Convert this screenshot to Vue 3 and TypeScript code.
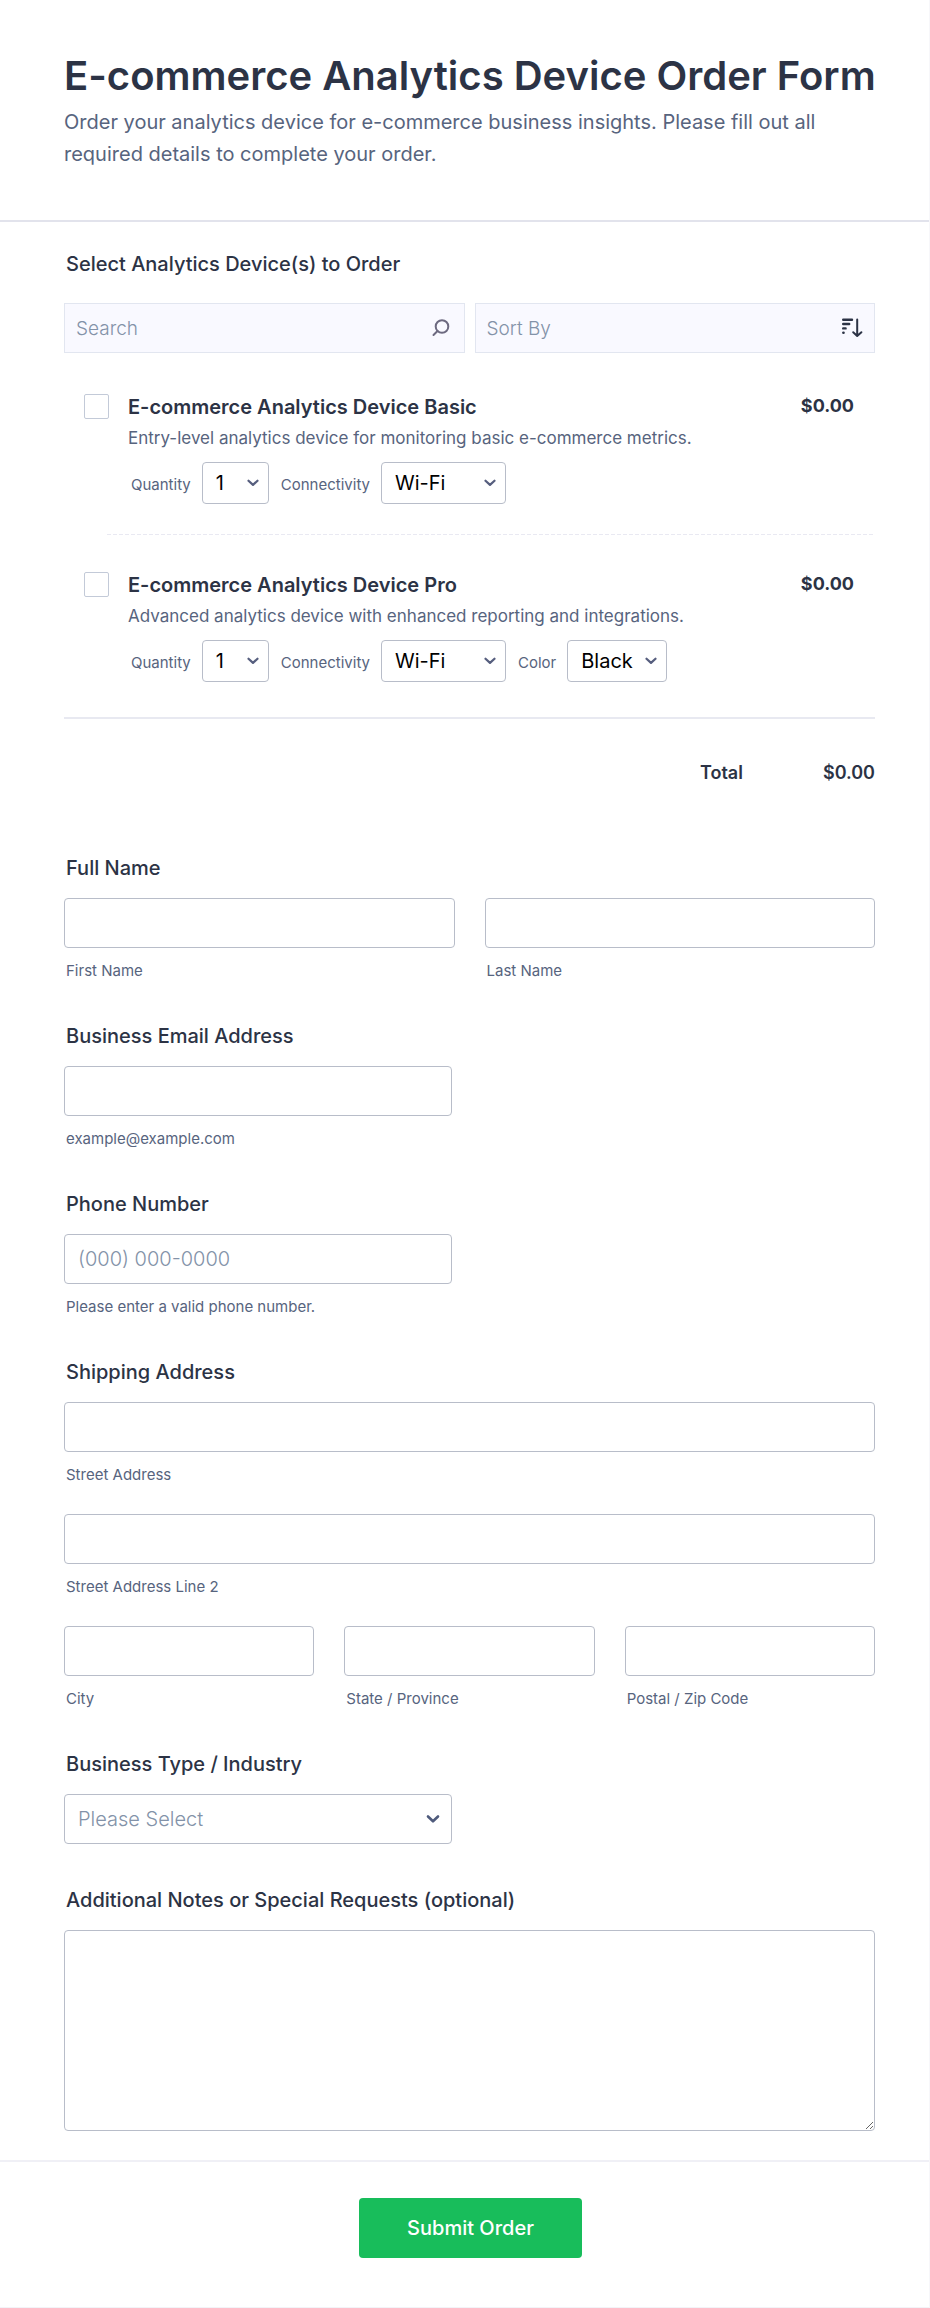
<script setup lang="ts">
import { ref } from 'vue'

interface Option {
  id: string
  label: string
  choices: string[]
  size: 'small' | 'wide' | 'medium'
}

interface Product {
  id: string
  name: string
  description: string
  price: string
  options: Option[]
}

const quantity = ['1', '2', '3', '4', '5', '6', '7', '8', '9', '10']
const connectivity = ['Wi-Fi', 'Ethernet', 'Bluetooth']

const products: Product[] = [
  {
    id: 'basic',
    name: 'E-commerce Analytics Device Basic',
    description: 'Entry-level analytics device for monitoring basic e-commerce metrics.',
    price: '$0.00',
    options: [
      { id: 'quantity', label: 'Quantity', choices: quantity, size: 'small' },
      { id: 'connectivity', label: 'Connectivity', choices: connectivity, size: 'wide' },
    ],
  },
  {
    id: 'pro',
    name: 'E-commerce Analytics Device Pro',
    description: 'Advanced analytics device with enhanced reporting and integrations.',
    price: '$0.00',
    options: [
      { id: 'quantity', label: 'Quantity', choices: quantity, size: 'small' },
      { id: 'connectivity', label: 'Connectivity', choices: connectivity, size: 'wide' },
      { id: 'color', label: 'Color', choices: ['Black', 'White'], size: 'medium' },
    ],
  },
]

const addressRows = [
  [{ id: 'street', label: 'Street Address' }],
  [{ id: 'street2', label: 'Street Address Line 2' }],
  [
    { id: 'city', label: 'City' },
    { id: 'state', label: 'State / Province' },
    { id: 'postal', label: 'Postal / Zip Code' },
  ],
]

const industries = ['Retail', 'Wholesale', 'Technology', 'Other']
const industry = ref('')
</script>

<template>
  <form class="form" @submit.prevent>
    <header class="header">
      <h1>E-commerce Analytics Device Order Form</h1>
      <p>Order your analytics device for e-commerce business insights. Please fill out all required details to complete your order.</p>
    </header>

    <main class="body">
      <section class="products" aria-labelledby="products-title">
        <h2 id="products-title" class="label">Select Analytics Device(s) to Order</h2>

        <div class="filters">
          <div class="filter">
            <input type="search" placeholder="Search" aria-label="Search" />
            <svg class="search-icon" width="18" height="18" viewBox="0 0 18 18" fill="none" stroke="#6d6a80" stroke-width="2" stroke-linecap="round" aria-hidden="true">
              <circle cx="10" cy="7.5" r="6.3" />
              <path d="M5.5 12 1.5 16" />
            </svg>
          </div>
          <div class="filter">
            <select aria-label="Sort By">
              <option>Sort By</option>
              <option>Name</option>
              <option>Price</option>
            </select>
            <svg class="sort-icon" width="22" height="20" viewBox="0 0 22 20" fill="none" stroke="#2c3345" stroke-linecap="round" stroke-linejoin="round" aria-hidden="true">
              <path d="M2.2 1.7H11M2.2 6H8.2M2.2 10.4H4.6" stroke-width="2.4" />
              <path d="M2.4 14.8H2.5" stroke-width="2.6" />
              <path d="M16.2 1.5V17.8M12.2 14.2 16.2 18 20.4 14.2" stroke-width="2" />
            </svg>
          </div>
        </div>

        <article v-for="product in products" :key="product.id" class="product">
          <input :id="product.id" class="tick" type="checkbox" />
          <div class="details">
            <div class="heading">
              <label class="name" :for="product.id">{{ product.name }}</label>
              <span class="price">{{ product.price }}</span>
            </div>
            <p class="description">{{ product.description }}</p>
            <div class="options">
              <div v-for="option in product.options" :key="option.id" class="option">
                <label :for="`${product.id}-${option.id}`">{{ option.label }}</label>
                <span class="picker" :class="option.size">
                  <select :id="`${product.id}-${option.id}`">
                    <option v-for="choice in option.choices" :key="choice">{{ choice }}</option>
                  </select>
                  <svg class="chevron" width="12" height="8" viewBox="0 0 12 8" fill="none" stroke="#565e7e" stroke-width="2.2" stroke-linecap="round" stroke-linejoin="round" aria-hidden="true">
                    <path d="M1.5 1.7 6 5.9 10.5 1.7" />
                  </svg>
                </span>
              </div>
            </div>
          </div>
        </article>

        <div class="total">
          <span>Total</span>
          <output>$0.00</output>
        </div>
      </section>

      <fieldset class="group">
        <legend class="label">Full Name</legend>
        <div class="row">
          <div class="cell">
            <input id="first" class="field" type="text" />
            <label class="hint" for="first">First Name</label>
          </div>
          <div class="cell">
            <input id="last" class="field" type="text" />
            <label class="hint" for="last">Last Name</label>
          </div>
        </div>
      </fieldset>

      <div class="group">
        <label class="label" for="email">Business Email Address</label>
        <input id="email" class="field half" type="email" aria-describedby="email-hint" />
        <span id="email-hint" class="hint">example@example.com</span>
      </div>

      <div class="group">
        <label class="label" for="phone">Phone Number</label>
        <input id="phone" class="field half" type="tel" placeholder="(000) 000-0000" aria-describedby="phone-hint" />
        <span id="phone-hint" class="hint">Please enter a valid phone number.</span>
      </div>

      <fieldset class="group">
        <legend class="label">Shipping Address</legend>
        <div class="address">
          <div v-for="(row, index) in addressRows" :key="index" class="row">
            <div v-for="cell in row" :key="cell.id" class="cell">
              <input :id="cell.id" class="field" type="text" />
              <label class="hint" :for="cell.id">{{ cell.label }}</label>
            </div>
          </div>
        </div>
      </fieldset>

      <div class="group">
        <label class="label" for="industry">Business Type / Industry</label>
        <span class="picker half">
          <select id="industry" v-model="industry" class="field" :class="{ empty: !industry }">
            <option value="">Please Select</option>
            <option v-for="item in industries" :key="item">{{ item }}</option>
          </select>
          <svg class="chevron large" width="14" height="10" viewBox="0 0 14 10" fill="none" stroke="#4f5b7c" stroke-width="2.6" stroke-linecap="round" stroke-linejoin="round" aria-hidden="true">
            <path d="M2 2.5 7 7.3 12 2.5" />
          </svg>
        </span>
      </div>

      <div class="group">
        <label class="label" for="notes">Additional Notes or Special Requests (optional)</label>
        <textarea id="notes" class="field notes"></textarea>
      </div>
    </main>

    <footer class="footer">
      <button type="submit">Submit Order</button>
    </footer>
  </form>
</template>

<style>
body {
  margin: 0;
  background: #fff;
}
</style>

<style scoped>
.form {
  box-sizing: border-box;
  border-right: 1px solid #f7f7fa;
  border-bottom: 1px solid #f3f3f8;
  background: #fff;
  color: #2c3345;
  font-family: Inter, "Liberation Sans", sans-serif;
  font-size: 20px;
}

.form * {
  box-sizing: border-box;
}

.header {
  padding: 52px 40px 50px 64px;
  border-bottom: 2px solid #e2e3ec;
}

h1 {
  margin: 0;
  font-size: 40px;
  font-weight: 600;
  line-height: 48px;
}

.header p {
  margin: 6px 0 0;
  color: #57647e;
  font-weight: 400;
  line-height: 32px;
}

.body {
  display: flex;
  flex-direction: column;
  gap: 44px;
  padding: 30px 54px 29px 64px;
}

.label {
  display: block;
  margin: 0 0 18px;
  padding: 0 2px;
  font-size: 20px;
  font-weight: 500;
  line-height: 24px;
}

.products .label {
  margin-bottom: 27px;
}

.filters {
  display: grid;
  grid-template-columns: 1fr 1fr;
  gap: 10px;
  margin-bottom: 38px;
}

.filter {
  display: grid;
  align-items: center;
}

.filter > *,
.picker > * {
  grid-area: 1 / 1;
}

.filter input,
.filter select {
  appearance: none;
  width: 100%;
  min-width: 0;
  height: 50px;
  margin: 0;
  padding: 0 44px 0 11px;
  border: 1px solid #e2e6f0;
  border-radius: 0;
  background: #f9f9ff;
  color: #8392a8;
  font: 300 19px "Inter", sans-serif;
}

.filter svg {
  justify-self: end;
  pointer-events: none;
}

.search-icon {
  margin-right: 15px;
}

.sort-icon {
  margin-right: 12px;
}

::placeholder {
  color: #8392a8;
  opacity: 1;
}

.product {
  display: flex;
  gap: 19px;
  padding-left: 20px;
}

.product + .product {
  margin-top: 34px;
}

.product:not(:last-of-type) {
  padding-bottom: 27px;
  background: repeating-linear-gradient(90deg, #e9e9f2 0 4px, transparent 4px 6px) right bottom / calc(100% - 43px) 1px no-repeat;
}

.tick {
  appearance: none;
  flex: none;
  width: 25px;
  height: 25px;
  margin: 3px 0 0;
  border: 1px solid #c3cad8;
  border-radius: 2px;
  background: #fff;
}

.tick:checked {
  background: #2e69ff;
}

.details {
  flex: 1;
  display: grid;
  min-width: 0;
}

.heading {
  display: flex;
  justify-content: space-between;
  padding-right: 21px;
}

.name {
  font-weight: 600;
  line-height: 32px;
}

.price {
  font-size: 18px;
  font-weight: 700;
  line-height: 30px;
}

.description {
  margin: 0;
  color: #57647e;
  font-size: 17px;
  line-height: 30px;
}

.options {
  display: flex;
  flex-wrap: wrap;
  gap: 12px;
  margin-top: 9px;
  padding-left: 3px;
}

.option {
  display: flex;
  gap: 11px;
  color: #57647e;
  font-size: 15px;
  line-height: 46px;
}

.picker {
  display: grid;
  align-items: center;
}

.small {
  width: 67px;
}

.wide {
  width: 125px;
}

.medium {
  width: 100px;
}

.option select {
  appearance: none;
  width: 100%;
  height: 42px;
  padding: 0 30px 0 13px;
  border: 1px solid #b8bdc9;
  border-radius: 4px;
  background: #fff;
  color: #000;
  font: 400 20px "Inter", sans-serif;
}

.option .picker {
  align-self: start;
}

.chevron {
  justify-self: end;
  margin-right: 10px;
  pointer-events: none;
}

.chevron.large {
  margin-right: 12px;
}

.total {
  display: flex;
  justify-content: flex-end;
  gap: 80px;
  margin-top: 31px;
  padding: 41px 0 26px;
  border-top: 2px solid #e8e9f1;
  font-size: 18px;
  font-weight: 600;
  line-height: 26px;
}

.group {
  display: block;
  min-width: 0;
  margin: 0;
  padding: 0;
  border: 0;
}

.row {
  display: grid;
  grid-auto-flow: column;
  grid-auto-columns: minmax(0, 1fr);
  gap: 30px;
}

.cell {
  display: grid;
}

.address {
  display: grid;
  gap: 30px;
}

.field {
  display: block;
  width: 100%;
  height: 50px;
  margin: 0;
  padding: 0 13px;
  border: 1px solid #b8bdc9;
  border-radius: 4px;
  background: #fff;
  color: #2c3345;
  font: 300 20px "Inter", sans-serif;
}

.half {
  width: calc(50% - 18px);
}

.picker .field {
  appearance: none;
}

.picker .empty {
  color: #8392a8;
}

.hint {
  display: block;
  margin-top: 14px;
  padding: 0 2px;
  color: #57647e;
  font-size: 15px;
  line-height: 18px;
}

.notes {
  height: 201px;
  padding: 12px 13px;
  resize: vertical;
}

.footer {
  display: flex;
  justify-content: center;
  padding: 36px 0 49px 12px;
  border-top: 2px solid #f0f0f6;
}

button {
  padding: 0 48px;
  border: 0;
  border-radius: 4px;
  background: #18bd5b;
  color: #fff;
  font: 500 20px "Inter", sans-serif;
  line-height: 60px;
}
</style>
